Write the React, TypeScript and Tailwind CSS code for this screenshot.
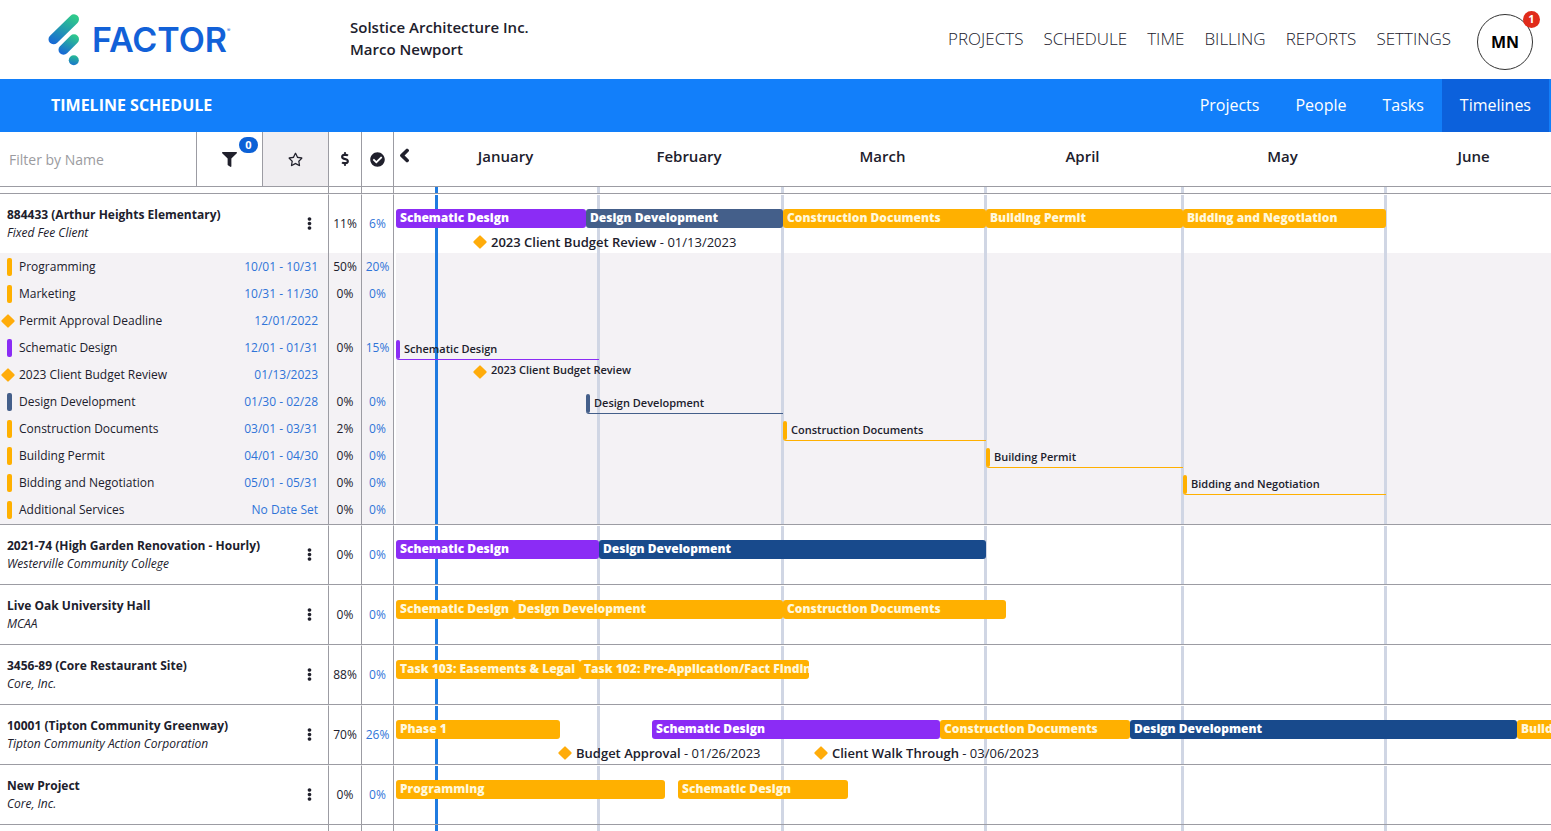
import { FaCheckCircle, FaChevronLeft, FaDollarSign, FaEllipsisV, FaFilter, FaRegStar } from 'react-icons/fa'
import clsx from 'clsx'

type Color = 'amber' | 'purple' | 'slate' | 'navy'

interface Phase {
  name: string
  start: number
  end: number
  color: Color
}

interface Milestone {
  name: string
  day: number
  date: string
}

interface Task {
  name: string
  dates: string
  spent?: string
  done?: string
  color?: Color
  start?: number
  end?: number
  milestoneDay?: number
  isMilestone?: boolean
}

interface Project {
  name: string
  client: string
  spent: string
  done: string
  phases: Phase[]
  milestones?: Milestone[]
  tasks?: Task[]
}

// days are counted from January 1
const DAY_WIDTH = 6.556
const TODAY = 6.3
const MONTHS = [
  { name: 'January', start: 0, end: 31 },
  { name: 'February', start: 31, end: 59 },
  { name: 'March', start: 59, end: 90 },
  { name: 'April', start: 90, end: 120 },
  { name: 'May', start: 120, end: 151 },
]

const toPx = (day: number) => Math.round(day * DAY_WIDTH)
const span = (start: number, end: number) => ({ left: toPx(start), width: toPx(end) - toPx(start) })

const fills: Record<Color, string> = {
  amber: 'bg-[#ffb000]',
  purple: 'bg-[#8b2cf5]',
  slate: 'bg-[#445f8a]',
  navy: 'bg-[#184a8c]',
}

const borders: Record<Color, string> = {
  amber: 'border-[#ffb000]',
  purple: 'border-[#8b2cf5]',
  slate: 'border-[#445f8a]',
  navy: 'border-[#184a8c]',
}

const projects: Project[] = [
  {
    name: '884433 (Arthur Heights Elementary)',
    client: 'Fixed Fee Client',
    spent: '11%',
    done: '6%',
    phases: [
      { name: 'Schematic Design', start: 0, end: 29, color: 'purple' },
      { name: 'Design Development', start: 29, end: 59, color: 'slate' },
      { name: 'Construction Documents', start: 59, end: 90, color: 'amber' },
      { name: 'Building Permit', start: 90, end: 120, color: 'amber' },
      { name: 'Bidding and Negotiation', start: 120, end: 151, color: 'amber' },
    ],
    milestones: [{ name: '2023 Client Budget Review', day: 12, date: '01/13/2023' }],
    tasks: [
      { name: 'Programming', dates: '10/01 - 10/31', spent: '50%', done: '20%', color: 'amber' },
      { name: 'Marketing', dates: '10/31 - 11/30', spent: '0%', done: '0%', color: 'amber' },
      { name: 'Permit Approval Deadline', dates: '12/01/2022', isMilestone: true },
      { name: 'Schematic Design', dates: '12/01 - 01/31', spent: '0%', done: '15%', color: 'purple', start: 0, end: 31 },
      { name: '2023 Client Budget Review', dates: '01/13/2023', isMilestone: true, milestoneDay: 12 },
      { name: 'Design Development', dates: '01/30 - 02/28', spent: '0%', done: '0%', color: 'slate', start: 29, end: 59 },
      { name: 'Construction Documents', dates: '03/01 - 03/31', spent: '2%', done: '0%', color: 'amber', start: 59, end: 90 },
      { name: 'Building Permit', dates: '04/01 - 04/30', spent: '0%', done: '0%', color: 'amber', start: 90, end: 120 },
      { name: 'Bidding and Negotiation', dates: '05/01 - 05/31', spent: '0%', done: '0%', color: 'amber', start: 120, end: 151 },
      { name: 'Additional Services', dates: 'No Date Set', spent: '0%', done: '0%', color: 'amber' },
    ],
  },
  {
    name: '2021-74 (High Garden Renovation - Hourly)',
    client: 'Westerville Community College',
    spent: '0%',
    done: '0%',
    phases: [
      { name: 'Schematic Design', start: 0, end: 31, color: 'purple' },
      { name: 'Design Development', start: 31, end: 90, color: 'navy' },
    ],
  },
  {
    name: 'Live Oak University Hall',
    client: 'MCAA',
    spent: '0%',
    done: '0%',
    phases: [
      { name: 'Schematic Design', start: 0, end: 18, color: 'amber' },
      { name: 'Design Development', start: 18, end: 59, color: 'amber' },
      { name: 'Construction Documents', start: 59, end: 93, color: 'amber' },
    ],
  },
  {
    name: '3456-89 (Core Restaurant Site)',
    client: 'Core, Inc.',
    spent: '88%',
    done: '0%',
    phases: [
      { name: 'Task 103: Easements & Legal', start: 0, end: 28, color: 'amber' },
      { name: 'Task 102: Pre-Application/Fact Finding', start: 28, end: 63, color: 'amber' },
    ],
  },
  {
    name: '10001 (Tipton Community Greenway)',
    client: 'Tipton Community Action Corporation',
    spent: '70%',
    done: '26%',
    phases: [
      { name: 'Phase 1', start: 0, end: 25, color: 'amber' },
      { name: 'Schematic Design', start: 39, end: 83, color: 'purple' },
      { name: 'Construction Documents', start: 83, end: 112, color: 'amber' },
      { name: 'Design Development', start: 112, end: 171, color: 'navy' },
      { name: 'Building Permit', start: 171, end: 201, color: 'amber' },
    ],
    milestones: [
      { name: 'Budget Approval', day: 25, date: '01/26/2023' },
      { name: 'Client Walk Through', day: 64, date: '03/06/2023' },
    ],
  },
  {
    name: 'New Project',
    client: 'Core, Inc.',
    spent: '0%',
    done: '0%',
    phases: [
      { name: 'Programming', start: 0, end: 41, color: 'amber' },
      { name: 'Schematic Design', start: 43, end: 69, color: 'amber' },
    ],
  },
]

function Logo() {
  return (
    <a href="#" className="flex items-center gap-3" aria-label="Factor">
      <svg width="32" height="54" viewBox="47 12 32 54" fill="none" aria-hidden="true">
        <defs>
          <linearGradient id="pillTop" gradientUnits="userSpaceOnUse" x1="70" y1="14" x2="54" y2="44">
            <stop stopColor="#2fc98b" />
            <stop offset="1" stopColor="#1768d6" />
          </linearGradient>
          <linearGradient id="pillMid" gradientUnits="userSpaceOnUse" x1="74" y1="34" x2="64" y2="54">
            <stop stopColor="#2fc98b" />
            <stop offset="1" stopColor="#1768d6" />
          </linearGradient>
          <linearGradient id="pillDot" gradientUnits="userSpaceOnUse" x1="74" y1="55" x2="72" y2="66">
            <stop stopColor="#26b796" />
            <stop offset="1" stopColor="#1768d6" />
          </linearGradient>
        </defs>
        <path d="M73 18.3 52.5 38.3" stroke="url(#pillTop)" strokeWidth="10" strokeLinecap="round" />
        <path d="M73 38.3 62.5 48.8" stroke="url(#pillMid)" strokeWidth="10" strokeLinecap="round" />
        <circle cx="72.8" cy="59.3" r="5" fill="url(#pillDot)" />
      </svg>
      <span className="flex items-start font-[Inter,sans-serif] text-[#1261d8]">
        <span className="text-[34px] leading-10 font-semibold">FACTOR</span>
        <span className="mt-2 text-[5px] leading-none">®</span>
      </span>
    </a>
  )
}

function Header() {
  return (
    <header className="flex h-[79px] items-center pr-[18px] pl-12">
      <div className="w-[302px] shrink-0">
        <Logo />
      </div>
      <div className="pb-1 text-[15px] leading-[22px] font-semibold">
        <p>Solstice Architecture Inc.</p>
        <p>Marco Newport</p>
      </div>
      <nav className="ml-auto flex items-center gap-5 pb-0.5 text-[17px] font-light">
        {['PROJECTS', 'SCHEDULE', 'TIME', 'BILLING', 'REPORTS', 'SETTINGS'].map((item) => (
          <a key={item} href="#">{item}</a>
        ))}
      </nav>
      <button className="relative mt-1 ml-[26px] size-14 rounded-full border border-[#333] font-bold text-black">
        MN
        <span className="absolute -top-1 -right-2 flex size-[17px] items-center justify-center rounded-full bg-[#e02b1a] text-[11px] text-white">
          1
        </span>
      </button>
    </header>
  )
}

function SubNav() {
  return (
    <div className="flex h-[53px] items-center justify-between bg-[#127ffa] pr-0.5 pl-[51px] text-white">
      <h1 className="pb-0.5 font-bold">TIMELINE SCHEDULE</h1>
      <nav className="flex h-full">
        {['Projects', 'People', 'Tasks', 'Timelines'].map((item) => (
          <a
            key={item}
            href="#"
            className={clsx('flex h-full items-center px-[18px] pb-0.5', item === 'Timelines' && 'bg-[#0c61dc]')}
          >
            {item}
          </a>
        ))}
      </nav>
    </div>
  )
}

function Diamond({ className }: { className?: string }) {
  return <span className={clsx('size-2.5 shrink-0 rotate-45 rounded-[1px] bg-[#ffac0a]', className)} />
}

function GridLines() {
  return (
    <>
      {MONTHS.map((m) => (
        <span key={m.name} className="absolute inset-y-0 -ml-0.5 w-[3px] bg-[#d0d6e4]" style={{ left: toPx(m.end) }} />
      ))}
      <span className="absolute inset-y-0 -ml-0.5 w-[3px] bg-[#1f7be0]" style={{ left: toPx(TODAY) }} />
    </>
  )
}

function Canvas({ shaded, children }: { shaded?: boolean; children?: React.ReactNode }) {
  return (
    <div className={clsx('absolute inset-y-0 right-0 left-0.5 overflow-hidden', shaded && 'bg-[#f4f2f5]')}>
      <GridLines />
      {children}
    </div>
  )
}

function PhaseBar({ phase }: { phase: Phase }) {
  return (
    <div
      className={clsx(
        'absolute top-3.5 h-[19px] overflow-hidden rounded-[3px] pl-1 text-xs leading-[17px] font-extrabold whitespace-nowrap',
        fills[phase.color],
        phase.color === 'amber' ? 'text-[#fff8dc]' : 'text-white'
      )}
      style={span(phase.start, phase.end)}
    >
      {phase.name}
    </div>
  )
}

function TaskBar({ task }: { task: Task }) {
  if (task.milestoneDay !== undefined) {
    return (
      <div className="absolute top-0.5 flex items-start gap-1.5" style={{ left: toPx(task.milestoneDay) }}>
        <Diamond className="mt-1" />
        <span className="text-[11px] leading-[14px] font-semibold whitespace-nowrap">{task.name}</span>
      </div>
    )
  }
  if (task.color && task.start !== undefined && task.end !== undefined) {
    return (
      <div
        className={clsx('absolute top-1.5 flex h-5 gap-1 rounded-bl-[3px] border-b', borders[task.color])}
        style={span(task.start, task.end)}
      >
        <span className={clsx('w-1 shrink-0 rounded-[2px]', fills[task.color])} />
        <span className="text-[11px] leading-[18px] font-semibold whitespace-nowrap">{task.name}</span>
      </div>
    )
  }
  return null
}

function TaskRow({ task, last }: { task: Task; last: boolean }) {
  const edge = last && 'border-b'
  return (
    <tr className={clsx('bg-[#f4f2f5]', last ? 'h-[29px]' : 'h-[27px]')}>
      <th scope="row" className={clsx('border-[#9c9ca3] p-0 font-normal', edge)}>
        <div className="flex items-center pr-2.5">
          <span className={clsx('flex w-[19px] shrink-0', task.isMilestone ? 'pl-[3px]' : 'pl-[7px]')}>
            {task.isMilestone ? (
              <Diamond />
            ) : (
              <span className={clsx('h-[18px] w-[5px] rounded-[2px]', fills[task.color ?? 'amber'])} />
            )}
          </span>
          <span>{task.name}</span>
          <span className="ml-auto text-[#2f74d8]">{task.dates}</span>
        </div>
      </th>
      <td className={clsx('border-l border-[#9c9ca3] p-0 text-center', edge)}>{task.spent}</td>
      <td className={clsx('border-l border-[#9c9ca3] p-0 text-center text-[#2f74d8]', edge)}>{task.done}</td>
      <td className={clsx('relative border-l border-[#9c9ca3] bg-white p-0', edge)}>
        <Canvas shaded>
          <TaskBar task={task} />
        </Canvas>
      </td>
    </tr>
  )
}

function ProjectRow({ project }: { project: Project }) {
  const edge = clsx('border-t border-t-white', !project.tasks && 'border-b border-b-[#9c9ca3]')
  return (
    <tr className={project.tasks ? 'h-[59px]' : 'h-[60px]'}>
      <th scope="row" className={clsx('p-0 pt-[11px] align-top font-normal', edge)}>
        <div className="flex items-center pr-3 pl-[7px]">
          <div className="leading-[18px]">
            <p className="font-bold">{project.name}</p>
            <p className="italic">{project.client}</p>
          </div>
          <button className="mb-0.5 ml-auto flex w-3.5 justify-center" aria-label={`Options for ${project.name}`}>
            <FaEllipsisV size={13} />
          </button>
        </div>
      </th>
      <td className={clsx('border-l border-l-[#9c9ca3] p-0 text-center', edge)}>{project.spent}</td>
      <td className={clsx('border-l border-l-[#9c9ca3] p-0 text-center text-[#2f74d8]', edge)}>{project.done}</td>
      <td className={clsx('relative border-l border-l-[#9c9ca3] p-0', edge)}>
        <Canvas>
          {project.phases.map((phase) => (
            <PhaseBar key={phase.name} phase={phase} />
          ))}
          {project.milestones?.map((m) => (
            <div
              key={m.name}
              className="absolute top-[38px] flex items-center gap-1.5 text-[13px] leading-[18px] whitespace-nowrap"
              style={{ left: toPx(m.day) }}
            >
              <Diamond />
              <span>
                <b className="font-semibold">{m.name}</b> - {m.date}
              </span>
            </div>
          ))}
        </Canvas>
      </td>
    </tr>
  )
}

function SpacerRow({ className, bordered }: { className: string; bordered?: boolean }) {
  const edge = bordered && 'border-b'
  return (
    <tr className={className} aria-hidden="true">
      <td className={clsx('border-[#9c9ca3] p-0', edge)} />
      <td className={clsx('border-l border-[#9c9ca3] p-0', edge)} />
      <td className={clsx('border-l border-[#9c9ca3] p-0', edge)} />
      <td className={clsx('relative border-l border-[#9c9ca3] p-0', edge)}>
        <Canvas />
      </td>
    </tr>
  )
}

function TableHead() {
  return (
    <thead>
      <tr className="h-[55px]">
        <th scope="col" className="border-b border-[#9c9ca3] p-0">
          <div className="flex h-[54px]">
            <input
              type="text"
              aria-label="Filter by Name"
              placeholder="Filter by Name"
              className="w-[196px] px-[9px] pt-0.5 text-sm font-normal outline-none placeholder:text-[#9b9ba0]"
            />
            <button className="relative flex flex-1 items-center justify-center border-l border-[#9c9ca3]" aria-label="Filters">
              <FaFilter size={15} />
              <span className="absolute top-[5px] right-1 flex h-4 w-[19px] items-center justify-center rounded-full bg-[#0c61d6] text-[11px] font-bold text-white">
                0
              </span>
            </button>
            <button
              className="flex flex-1 items-center justify-center border-l border-[#9c9ca3] bg-[#f0eef1]"
              aria-label="Favorites"
            >
              <FaRegStar size={15} />
            </button>
          </div>
        </th>
        <th scope="col" className="border-b border-l border-[#9c9ca3] p-0" aria-label="Budget spent">
          <FaDollarSign size={14} className="mx-auto" />
        </th>
        <th scope="col" className="border-b border-l border-[#9c9ca3] p-0" aria-label="Complete">
          <FaCheckCircle size={15} className="mx-auto" />
        </th>
        <th scope="col" className="overflow-hidden border-b border-l border-[#9c9ca3] p-0 pb-1.5">
          <div className="flex items-center text-[15px] font-semibold">
            {MONTHS.map((m, i) => (
              <div key={m.name} className="flex shrink-0 items-center" style={{ width: toPx(m.end) - toPx(m.start) }}>
                {i === 0 && (
                  <button className="flex w-5 justify-center" aria-label="Earlier months">
                    <FaChevronLeft size={15} stroke="currentColor" strokeWidth={40} />
                  </button>
                )}
                <span className="flex-1 text-center">{m.name}</span>
              </div>
            ))}
            <span className="flex-1 pl-3 text-center">June</span>
          </div>
        </th>
      </tr>
    </thead>
  )
}

export default function App() {
  return (
    <div className="min-h-screen bg-white font-['Open_Sans',sans-serif] text-[#20202c]">
      <Header />
      <SubNav />
      <main>
        <table className="w-full table-fixed border-separate border-spacing-0 text-left text-xs">
          <colgroup>
            <col className="w-[328px]" />
            <col className="w-[33px]" />
            <col className="w-8" />
            <col />
          </colgroup>
          <TableHead />
          <tbody>
            <SpacerRow className="h-[7px]" bordered />
            {projects.map((project) => [
              <ProjectRow key={project.name} project={project} />,
              ...(project.tasks ?? []).map((task, i, all) => (
                <TaskRow key={`${project.name}-${task.name}`} task={task} last={i === all.length - 1} />
              )),
            ])}
            <SpacerRow className="h-1.5" />
          </tbody>
        </table>
      </main>
    </div>
  )
}
